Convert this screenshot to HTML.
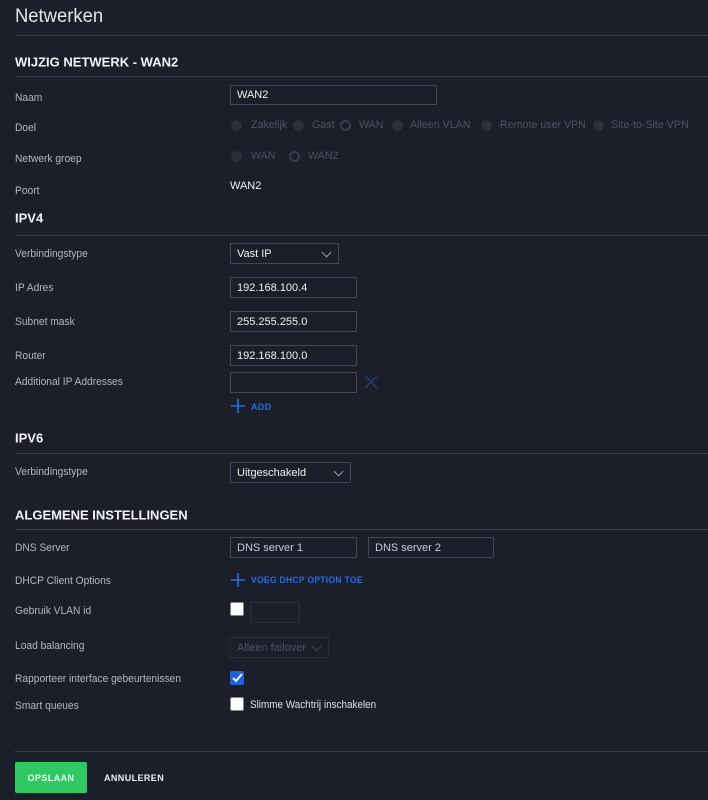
<!DOCTYPE html>
<html><head><meta charset="utf-8"><style>
*{margin:0;padding:0;box-sizing:border-box}
body{width:708px;height:800px;background:#1c1e2a;font-family:"Liberation Sans",sans-serif;color:#dfe1e8;position:relative;overflow:hidden}
.a{position:absolute;white-space:nowrap}
.l{position:absolute;left:15px;font-size:11px;color:#b4b7c2;transform:translateY(-40%) scaleX(0.93);transform-origin:left center;white-space:nowrap}
.h{position:absolute;left:15px;font-size:13px;font-weight:bold;color:#f2f3f6;transform:translateY(-50%);white-space:nowrap}
.hr{position:absolute;left:15px;right:0;height:1px;background:#3b3e4b}
.in{position:absolute;border:1px solid #434655;background:#1c1e2a;font-size:11px;color:#f0f0f3;padding-left:6px;display:flex;align-items:center;white-space:nowrap}
.r{position:absolute;width:11px;height:11px;border-radius:50%;background:#2c2f3b}
.ro{background:#1c1e2a;border:2px solid #3a3d49}
.rt{position:absolute;font-size:11px;color:#4e5160;transform:translateY(-50%) scaleX(0.97);transform-origin:left center;white-space:nowrap}
.cv{position:absolute;right:8px;top:5px;width:7px;height:7px;border-right:1px solid #9a9dab;border-bottom:1px solid #9a9dab;transform:rotate(45deg)}
.cb{position:absolute;width:14px;height:14px;border-radius:2px;background:#fff;border:1px solid #888}
.blue{color:#1f6fe5;font-size:9px;font-weight:bold;letter-spacing:.3px}
</style></head><body>
<div class="a" style="left:15px;top:6px;font-size:19px;color:#e6e7ec;font-weight:300;transform:scaleX(0.97);transform-origin:left">Netwerken</div>
<div class="hr" style="top:35px"></div>
<div class="h" style="top:62px">WIJZIG NETWERK - WAN2</div>
<div class="hr" style="top:76px"></div>

<div class="l" style="top:97px">Naam</div>
<div class="in" style="left:230px;top:85px;width:207px;height:20px">WAN2</div>

<div class="l" style="top:127px">Doel</div>
<div class="r" style="left:231px;top:120px"></div><div class="rt" style="left:251px;top:125px">Zakelijk</div>
<div class="r" style="left:293px;top:120px"></div><div class="rt" style="left:312px;top:125px">Gast</div>
<div class="r ro" style="left:340px;top:120px"></div><div class="rt" style="left:359px;top:125px">WAN</div>
<div class="r" style="left:392px;top:120px"></div><div class="rt" style="left:410px;top:125px">Alleen VLAN</div>
<div class="r" style="left:481px;top:120px"></div><div class="rt" style="left:500px;top:125px">Remote user VPN</div>
<div class="r" style="left:593px;top:120px"></div><div class="rt" style="left:611px;top:125px">Site-to-Site VPN</div>

<div class="l" style="top:158px">Netwerk groep</div>
<div class="r" style="left:231px;top:151px"></div><div class="rt" style="left:251px;top:156px">WAN</div>
<div class="r ro" style="left:289px;top:151px"></div><div class="rt" style="left:308px;top:156px">WAN2</div>

<div class="l" style="top:190px">Poort</div>
<div class="a" style="left:230px;top:180px;font-size:11px;color:#f0f0f3">WAN2</div>

<div class="h" style="top:218px">IPV4</div>
<div class="hr" style="top:235px"></div>
<div class="l" style="top:253px">Verbindingstype</div>
<div class="in" style="left:230px;top:243px;width:109px;height:21px">Vast IP<span class="cv"></span></div>
<div class="l" style="top:287px">IP Adres</div>
<div class="in" style="left:230px;top:277px;width:127px;height:21px">192.168.100.4</div>
<div class="l" style="top:321px">Subnet mask</div>
<div class="in" style="left:230px;top:311px;width:127px;height:21px">255.255.255.0</div>
<div class="l" style="top:355px">Router</div>
<div class="in" style="left:230px;top:345px;width:127px;height:21px">192.168.100.0</div>
<div class="l" style="top:381px">Additional IP Addresses</div>
<div class="in" style="left:230px;top:372px;width:127px;height:21px"></div>
<svg class="a" style="left:364px;top:375px" width="14" height="14"><path d="M1 1L13 13M13 1L1 13" stroke="#1e3f73" stroke-width="1.5"/></svg>
<svg class="a" style="left:231px;top:399px" width="14" height="14"><path d="M7 0V14M0 7H14" stroke="#1f6fe5" stroke-width="1.6"/></svg>
<div class="a blue" style="left:251px;top:402px">ADD</div>

<div class="h" style="top:438px">IPV6</div>
<div class="hr" style="top:453px"></div>
<div class="l" style="top:471px">Verbindingstype</div>
<div class="in" style="left:230px;top:462px;width:121px;height:21px">Uitgeschakeld<span class="cv"></span></div>

<div class="h" style="top:515px">ALGEMENE INSTELLINGEN</div>
<div class="hr" style="top:529px"></div>
<div class="l" style="top:547px">DNS Server</div>
<div class="in" style="left:230px;top:537px;width:127px;height:21px;color:#c8cad3">DNS server 1</div>
<div class="in" style="left:368px;top:537px;width:126px;height:21px;color:#c8cad3">DNS server 2</div>
<div class="l" style="top:580px">DHCP Client Options</div>
<svg class="a" style="left:231px;top:573px" width="14" height="14"><path d="M7 0V14M0 7H14" stroke="#1f6fe5" stroke-width="1.6"/></svg>
<div class="a blue" style="left:251px;top:575px;transform:scaleX(0.95);transform-origin:left">VOEG DHCP OPTION TOE</div>
<div class="l" style="top:610px">Gebruik VLAN id</div>
<div class="cb" style="left:230px;top:602px"></div>
<div class="in" style="left:250px;top:602px;width:50px;height:21px;border-color:#2c2f3b"></div>
<div class="l" style="top:645px">Load balancing</div>
<div class="in" style="left:230px;top:637px;width:99px;height:21px;border-color:#2c2f3b;color:#4e5160">Alleen failover<span class="cv" style="border-color:#3f4250"></span></div>
<div class="l" style="top:678px">Rapporteer interface gebeurtenissen</div>
<div class="cb" style="left:230px;top:671px;background:#1b63d6;border-color:#1b63d6"></div>
<svg class="a" style="left:232px;top:673px" width="11" height="10"><path d="M1 5L4 8L10 1" stroke="#fff" stroke-width="1.8" fill="none"/></svg>
<div class="l" style="top:705px">Smart queues</div>
<div class="cb" style="left:230px;top:697px"></div>
<div class="a" style="left:250px;top:699px;font-size:11px;color:#dfe1e8;transform:scaleX(0.9);transform-origin:left">Slimme Wachtrij inschakelen</div>

<div class="hr" style="top:751px"></div>
<div class="a" style="left:15px;top:762px;width:72px;height:31px;background:#2fc862;border-radius:2px;color:#eafff0;font-size:9px;font-weight:bold;letter-spacing:.4px;display:flex;align-items:center;justify-content:center">OPSLAAN</div>
<div class="a" style="left:104px;top:773px;font-size:9px;font-weight:bold;letter-spacing:.4px;color:#f0f0f3">ANNULEREN</div>
</body></html>
